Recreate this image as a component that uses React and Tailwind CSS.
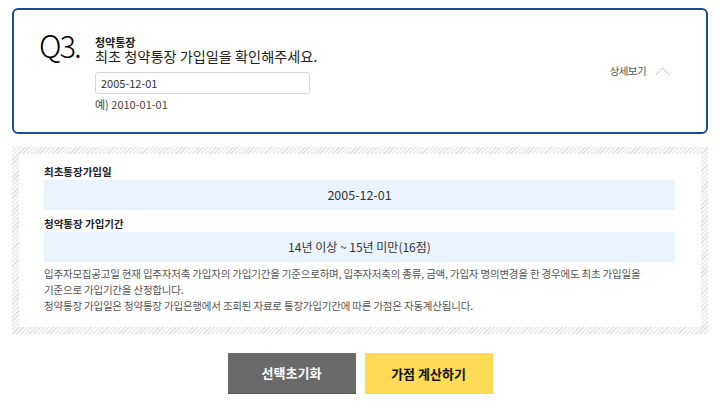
export default function App() {
  return (
    <div className="w-[720px] h-[412px] bg-white px-3 pt-2 font-['Noto_Sans_CJK_KR','Noto_Sans',sans-serif] text-[#222]">
      {/* Question card */}
      <div className="h-[126px] rounded-[6px] border-2 border-[#1f4a98] flex items-start pl-[25px] pr-[36px] pt-[17px]">
        <div className="text-[31px] leading-[36px] font-light tracking-[-2px] text-black w-[56px]">
          Q3.
        </div>
        <div className="flex-1 pt-[10px]">
          <p className="text-[11px] leading-[11px] font-bold">청약통장</p>
          <p className="text-[14.2px] leading-[15px] mt-[1px]">최초 청약통장 가입일을 확인해주세요.</p>
          <div className="mt-[8px] w-[215px] h-[22px] rounded-[3px] border border-[#d6d6d6] flex items-center px-[5px] text-[11px] text-[#333]">
            2005-12-01
          </div>
          <p className="mt-[2px] text-[11px] leading-[16px] text-[#444]">예) 2010-01-01</p>
        </div>
        <div className="flex items-center gap-[9px] self-center mb-[18px] text-[10.5px] tracking-[-0.6px] text-[#555]">
          <span>상세보기</span>
          <svg width="15" height="10" viewBox="0 0 15 10" fill="none">
            <path d="M1 9 L7.5 2 L14 9" stroke="#c4c4c4" strokeWidth="1" />
          </svg>
        </div>
      </div>

      {/* Result box */}
      <div className="mt-[13px] p-[7px] bg-[repeating-linear-gradient(135deg,#e2e2e2_0,#e2e2e2_1px,#fafafa_1px,#fafafa_3px)]">
        <div className="bg-white pt-[10px] pb-[13px] pl-[25px] pr-[26px]">
          <p className="text-[10.5px] leading-4 font-bold">최초통장가입일</p>
          <div className="h-[30px] bg-[#ebf3fe] flex items-center justify-center text-[12.5px] text-[#333]">
            2005-12-01
          </div>
          <p className="mt-[6px] text-[10.5px] leading-4 font-bold">청약통장 가입기간</p>
          <div className="h-[30px] bg-[#ebf3fe] flex items-center justify-center text-[12px] text-[#333]">
            14년 이상 ~ 15년 미만(16점)
          </div>
          <p className="mt-[4px] text-[10.5px] leading-4 tracking-[-0.2px] text-[#555]">
            입주자모집공고일 현재 입주자저축 가입자의 가입기간을 기준으로하며, 입주자저축의 종류, 금액, 가입자 명의변경을 한 경우에도 최초 가입일을
            <br />
            기준으로 가입기간을 산정합니다.
            <br />
            청약통장 가입일은 청약통장 가입은행에서 조회된 자료로 통장가입기간에 따른 가점은 자동계산됩니다.
          </p>
        </div>
      </div>

      {/* Buttons */}
      <div className="mt-[19px] flex justify-center gap-[9px]">
        <button className="w-[128px] h-[41px] bg-[#6a6a6a] border-b border-[#555] text-white text-[13px] font-bold">
          선택초기화
        </button>
        <button className="w-[128px] h-[41px] bg-[#fcdb55] text-[#111] text-[13px] font-bold">
          가점 계산하기
        </button>
      </div>
    </div>
  );
}
